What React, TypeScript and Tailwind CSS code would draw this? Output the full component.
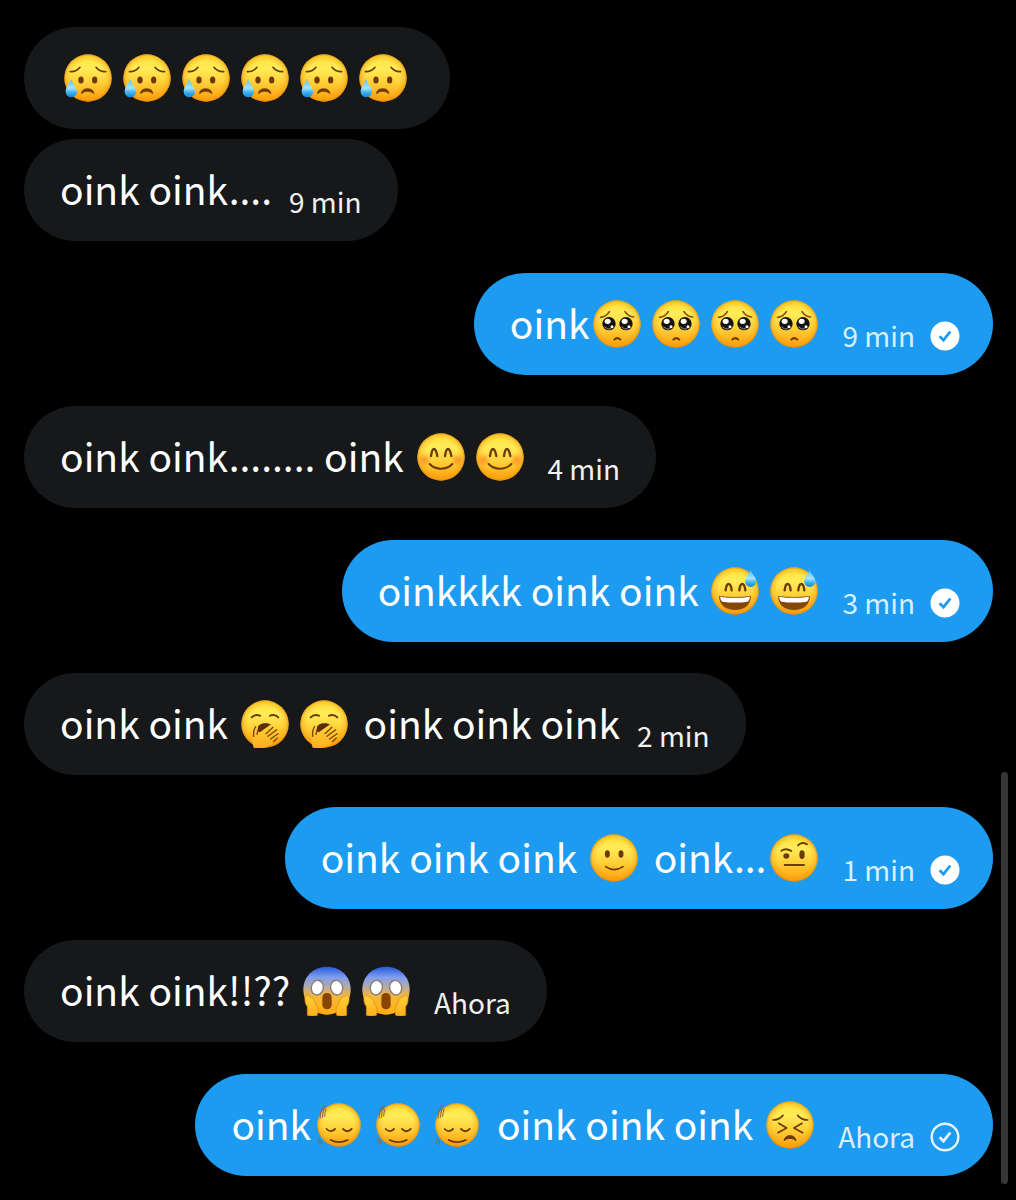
import React from 'react';

type EmojiName =
  | 'sad_relieved'
  | 'pleading'
  | 'blush'
  | 'sweat_smile'
  | 'yawning'
  | 'smile'
  | 'raised_eyebrow'
  | 'scream'
  | 'shaking'
  | 'persevere';

interface EmojiDef {
  label: string;
  radius?: number;
  noFace?: boolean;
  art: React.ReactNode;
}

interface Message {
  id: number;
  outgoing?: boolean;
  parts: (string | { emoji: EmojiName; count: number })[];
  time?: string;
  status?: 'read' | 'sent';
}

const BROWN = '#6b3a05';

const EMOJIS: Record<EmojiName, EmojiDef> = {
  sad_relieved: {
    label: '😥',
    art: (
      <>
        <g fill="none" stroke={BROWN} strokeWidth="5" strokeLinecap="round">
          <path d="M22 56Q40 57 51 43" />
          <path d="M99 43Q110 57 128 56" />
        </g>
        <ellipse cx="54" cy="81" rx="8" ry="10.5" fill={BROWN} />
        <ellipse cx="95" cy="81" rx="8" ry="10.5" fill={BROWN} />
        <path d="M55 122Q57 107 74 107T93 122Q84 115 74 115T55 122Z" fill={BROWN} stroke={BROWN} strokeWidth="2" />
        <path d="M24 77C28 92 42 102 42 116A17 17 0 0 1 8 116C8 102 20 92 24 77Z" fill="url(#tear)" />
      </>
    ),
  },
  pleading: {
    label: '🥺',
    art: (
      <>
        <g fill="none" stroke="#8a4a05" strokeWidth="5" strokeLinecap="round">
          <path d="M26 55Q43 53 52 38" />
          <path d="M99 38Q108 53 125 54" />
        </g>
        <g fill="#17110f">
          <circle cx="51" cy="74" r="20" />
          <circle cx="102" cy="74" r="20" />
        </g>
        <g fill="#fff">
          <ellipse cx="47" cy="67" rx="9" ry="8" />
          <circle cx="60" cy="83" r="4.5" />
          <ellipse cx="98" cy="67" rx="9" ry="8" />
          <circle cx="111" cy="83" r="4.5" />
        </g>
        <g fill="none" stroke="#97908a" strokeWidth="3" strokeLinecap="round">
          <path d="M38 84Q46 93 56 90" />
          <path d="M89 84Q97 93 107 90" />
        </g>
        <path d="M67 122Q76 113 85 122" fill="none" stroke={BROWN} strokeWidth="6" strokeLinecap="round" />
      </>
    ),
  },
  blush: {
    label: '😊',
    art: (
      <>
        <circle cx="25" cy="84" r="21" fill="url(#cheek)" />
        <circle cx="125" cy="84" r="21" fill="url(#cheek)" />
        <g fill="none" stroke={BROWN} strokeWidth="7" strokeLinecap="round">
          <path d="M45 72Q48 51 54 51T64 72" />
          <path d="M87 72Q90 51 96 51T106 72" />
        </g>
        <path d="M41 96Q54 110 75 110T109 96" fill="none" stroke={BROWN} strokeWidth="6" strokeLinecap="round" />
      </>
    ),
  },
  sweat_smile: {
    label: '😅',
    art: (
      <>
        <g fill="none" stroke={BROWN} strokeWidth="7" strokeLinecap="round">
          <path d="M47 73Q49 54 56 54T65 73" />
          <path d="M88 73Q90 54 97 54T106 73" />
        </g>
        <path d="M27 90Q75 96 123 90C122 117 103 132 75 132S28 117 27 90Z" fill="#83470a" />
        <path d="M30 92Q75 99 120 92Q119 103 113 107Q75 112 37 107Q31 102 30 92Z" fill="#fff" />
        <path d="M122 12C126 26 139 33 139 46A17 17 0 0 1 105 46C105 33 118 26 122 12Z" fill="url(#tear)" />
      </>
    ),
  },
  yawning: {
    label: '🥱',
    art: (
      <>
        <g fill="none" stroke={BROWN} strokeWidth="6" strokeLinecap="round">
          <path d="M35 55Q44 45 60 50" />
          <path d="M90 50Q106 45 115 55" />
        </g>
        <path d="M51 97C52 80 61 73 76 73S96 78 99 88L76 104Z" fill="#5a2d06" />
        <path
          d="M41 146C34 123 40 107 44 90C46 79 55 81 53 92L51 106L89 79C98 74 102 82 95 88L108 84C116 82 118 90 111 95C119 92 121 100 115 105C119 106 118 114 111 119C94 137 79 152 41 146Z"
          fill="url(#hand)"
        />
        <g fill="none" stroke="#7b4506" strokeWidth="4" strokeLinecap="round">
          <path d="M47 83Q39 94 41 112" />
          <path d="M54 93Q52 100 51 106" />
          <path d="M78 104L99 85" />
          <path d="M84 112L110 92" />
          <path d="M92 120L114 104" />
          <path d="M100 128L112 117" />
        </g>
      </>
    ),
  },
  smile: {
    label: '🙂',
    art: (
      <>
        <ellipse cx="55" cy="63" rx="7.5" ry="11" fill={BROWN} />
        <ellipse cx="96" cy="63" rx="7.5" ry="11" fill={BROWN} />
        <path d="M50 101Q75 119 102 101" fill="none" stroke={BROWN} strokeWidth="5" strokeLinecap="round" />
      </>
    ),
  },
  raised_eyebrow: {
    label: '🤨',
    art: (
      <>
        <ellipse cx="52" cy="69" rx="9" ry="8" fill={BROWN} />
        <ellipse cx="99" cy="65" rx="8" ry="13" fill={BROWN} />
        <g fill="none" stroke={BROWN} strokeWidth="5.5" strokeLinecap="round">
          <path d="M37 53Q51 44 67 54" />
          <path d="M87 37Q98 25 114 34" />
          <path d="M47 96H105" />
        </g>
      </>
    ),
  },
  scream: {
    label: '😱',
    noFace: true,
    art: (
      <>
        <path d="M75 2C116 2 146 32 146 70C146 113 114 146 75 146S4 113 4 70C4 32 34 2 75 2Z" fill="url(#scream)" />
        <g fill="#fff" stroke="#8b7c72" strokeWidth="4">
          <ellipse cx="46" cy="65" rx="18" ry="22" transform="rotate(12 46 65)" />
          <ellipse cx="104" cy="65" rx="18" ry="22" transform="rotate(-12 104 65)" />
        </g>
        <rect x="61" y="81" width="28" height="49" rx="14" fill="#8a4505" />
        <g fill="url(#hand)" stroke="#dc8509" strokeWidth="2">
          <path d="M16 148V122C9 113 8 103 9 94C11 85 19 87 22 92C33 93 38 103 40 115C48 120 50 133 46 148Q31 153 16 148Z" />
          <path d="M134 148V122C141 113 142 103 141 94C139 85 131 87 128 92C117 93 112 103 110 115C102 120 100 133 104 148Q119 153 134 148Z" />
        </g>
      </>
    ),
  },
  shaking: {
    label: '🫨',
    radius: 65,
    art: (
      <>
        <g fill="none" stroke={BROWN} strokeWidth="5.5" strokeLinecap="round">
          <path d="M38 87Q50 100 63 87" />
          <path d="M87 87Q100 100 113 87" />
          <path d="M50 120Q75 133 101 120" />
        </g>
        <g fill="none" stroke="#8d6544" strokeWidth="3" strokeLinecap="round">
          <path d="M18 55Q17 36 28 17" />
          <path d="M25 52Q25 36 34 18" />
          <path d="M32 49Q32 38 36 28" />
          <path d="M15 114V130" />
          <path d="M22 121V134" />
        </g>
      </>
    ),
  },
  persevere: {
    label: '😣',
    art: (
      <>
        <g fill="none" stroke={BROWN} strokeWidth="5" strokeLinecap="round" strokeLinejoin="round">
          <path d="M24 60Q42 60 54 46" />
          <path d="M98 46Q110 60 128 60" />
          <path d="M41 70L65 84L39 98" />
          <path d="M111 70L87 84L113 98" />
        </g>
        <path d="M57 122Q60 107 75 107T93 122Q85 115 75 115T57 122Z" fill={BROWN} stroke={BROWN} strokeWidth="3" />
      </>
    ),
  },
};

const MESSAGES: Message[] = [
  { id: 1, parts: [{ emoji: 'sad_relieved', count: 6 }] },
  { id: 2, parts: ['oink oink....'], time: '9 min' },
  { id: 3, outgoing: true, parts: ['oink', { emoji: 'pleading', count: 4 }], time: '9 min', status: 'read' },
  { id: 4, parts: ['oink oink........ oink ', { emoji: 'blush', count: 2 }], time: '4 min' },
  { id: 5, outgoing: true, parts: ['oinkkkk oink oink ', { emoji: 'sweat_smile', count: 2 }], time: '3 min', status: 'read' },
  { id: 6, parts: ['oink oink ', { emoji: 'yawning', count: 2 }, ' oink oink oink'], time: '2 min' },
  {
    id: 7,
    outgoing: true,
    parts: ['oink oink oink ', { emoji: 'smile', count: 1 }, ' oink...', { emoji: 'raised_eyebrow', count: 1 }],
    time: '1 min',
    status: 'read',
  },
  { id: 8, parts: ['oink oink!!?? ', { emoji: 'scream', count: 2 }], time: 'Ahora' },
  {
    id: 9,
    outgoing: true,
    parts: ['oink', { emoji: 'shaking', count: 3 }, ' oink oink oink ', { emoji: 'persevere', count: 1 }],
    time: 'Ahora',
    status: 'sent',
  },
];

// Gradients shared by every emoji on the page
const EmojiDefs = () => (
  <svg className="absolute h-0 w-0" aria-hidden="true">
    <defs>
      <linearGradient id="face" x1="0" y1="0" x2="0" y2="1">
        <stop offset="0" stopColor="#ffe23a" />
        <stop offset="0.3" stopColor="#ffec58" />
        <stop offset="0.6" stopColor="#ffcf38" />
        <stop offset="1" stopColor="#ff9d0b" />
      </linearGradient>
      <radialGradient id="rim">
        <stop offset="0.72" stopColor="#f08c00" stopOpacity="0" />
        <stop offset="0.92" stopColor="#f39a08" stopOpacity="0.35" />
        <stop offset="1" stopColor="#d87b08" stopOpacity="0.8" />
      </radialGradient>
      <linearGradient id="tear" x1="0" y1="0" x2="0" y2="1">
        <stop offset="0" stopColor="#54bdf0" />
        <stop offset="0.5" stopColor="#a4e5ff" />
        <stop offset="0.75" stopColor="#38b0f2" />
        <stop offset="1" stopColor="#1685d5" />
      </linearGradient>
      <radialGradient id="cheek">
        <stop offset="0" stopColor="#ff6b1a" stopOpacity="0.6" />
        <stop offset="1" stopColor="#ff6b1a" stopOpacity="0" />
      </radialGradient>
      <linearGradient id="hand" x1="0" y1="0" x2="0" y2="1">
        <stop offset="0" stopColor="#ffd23a" />
        <stop offset="1" stopColor="#ffae1c" />
      </linearGradient>
      <linearGradient id="scream" x1="0" y1="0" x2="0" y2="1">
        <stop offset="0" stopColor="#2458d8" />
        <stop offset="0.22" stopColor="#7f9df0" />
        <stop offset="0.42" stopColor="#b5aaa8" />
        <stop offset="0.62" stopColor="#f5b83a" />
        <stop offset="1" stopColor="#ffad10" />
      </linearGradient>
    </defs>
  </svg>
);

const Emoji: React.FC<{ name: EmojiName }> = ({ name }) => {
  const { label, radius = 71, noFace, art } = EMOJIS[name];
  return (
    <svg
      viewBox="0 0 150 150"
      role="img"
      aria-label={label}
      className="-my-1 mr-[6px] ml-[3px] inline-block h-[50px] w-[50px] align-[-6px]"
    >
      {!noFace && (
        <>
          <circle cx="75" cy="75" r={radius} fill="url(#face)" />
          <circle cx="75" cy="75" r={radius} fill="url(#rim)" />
        </>
      )}
      {art}
    </svg>
  );
};

const StatusIcon: React.FC<{ status: 'read' | 'sent' }> = ({ status }) => (
  <svg viewBox="0 0 30 30" className="mb-1 ml-[15px] h-[30px] w-[30px] shrink-0" role="img" aria-label={status}>
    {status === 'read' ? (
      <circle cx="15" cy="15" r="14.5" fill="#fff" />
    ) : (
      <circle cx="15" cy="15" r="13.3" fill="none" stroke="#e6f4ff" strokeWidth="2.4" />
    )}
    <path
      d="M9.6 15.3L13.5 19.2L20.3 10.5"
      fill="none"
      stroke={status === 'read' ? '#1d9bf0' : '#e6f4ff'}
      strokeWidth="2.8"
    />
  </svg>
);

const Bubble: React.FC<{ message: Message }> = ({ message }) => {
  const { outgoing, parts, time, status } = message;
  return (
    <div
      className={`flex items-end rounded-[51px] pt-6 pb-5 pl-9 ${
        outgoing ? 'bg-[#1d9bf0] pr-[33px]' : 'bg-[#16181a] pr-9'
      }`}
    >
      <p className="pb-2 text-[39px] leading-[50px] whitespace-pre-wrap text-white">
        {parts.map((part, i) =>
          typeof part === 'string' ? (
            <span key={i}>{part}</span>
          ) : (
            Array.from({ length: part.count }, (_, n) => <Emoji key={`${i}-${n}`} name={part.emoji} />)
          )
        )}
      </p>
      {time && (
        <time
          className={`ml-[17px] text-[28px] leading-10 whitespace-nowrap ${outgoing ? 'text-[#d9efff]' : 'text-[#eff1f2]'}`}
        >
          {time}
        </time>
      )}
      {status && <StatusIcon status={status} />}
    </div>
  );
};

export default function App() {
  return (
    <main className="relative min-h-screen bg-black pt-[27px] pr-[23px] pb-6 pl-6 font-['Noto_Sans_CJK_JP','Noto_Sans',sans-serif]">
      <EmojiDefs />
      <ul className="flex flex-col">
        {MESSAGES.map((message, i) => {
          const grouped = i > 0 && !MESSAGES[i - 1].outgoing && !message.outgoing;
          return (
            <li
              key={message.id}
              className={`flex ${message.outgoing ? 'justify-end' : 'justify-start'} ${
                i === 0 ? '' : grouped ? 'mt-[10px]' : message.outgoing ? 'mt-8' : 'mt-[31px]'
              }`}
            >
              <Bubble message={message} />
            </li>
          );
        })}
      </ul>

      {/* SCROLLBAR THUMB */}
      <div className="absolute right-2 bottom-4 h-[412px] w-[7px] rounded-full bg-[#363636]" />
    </main>
  );
}
